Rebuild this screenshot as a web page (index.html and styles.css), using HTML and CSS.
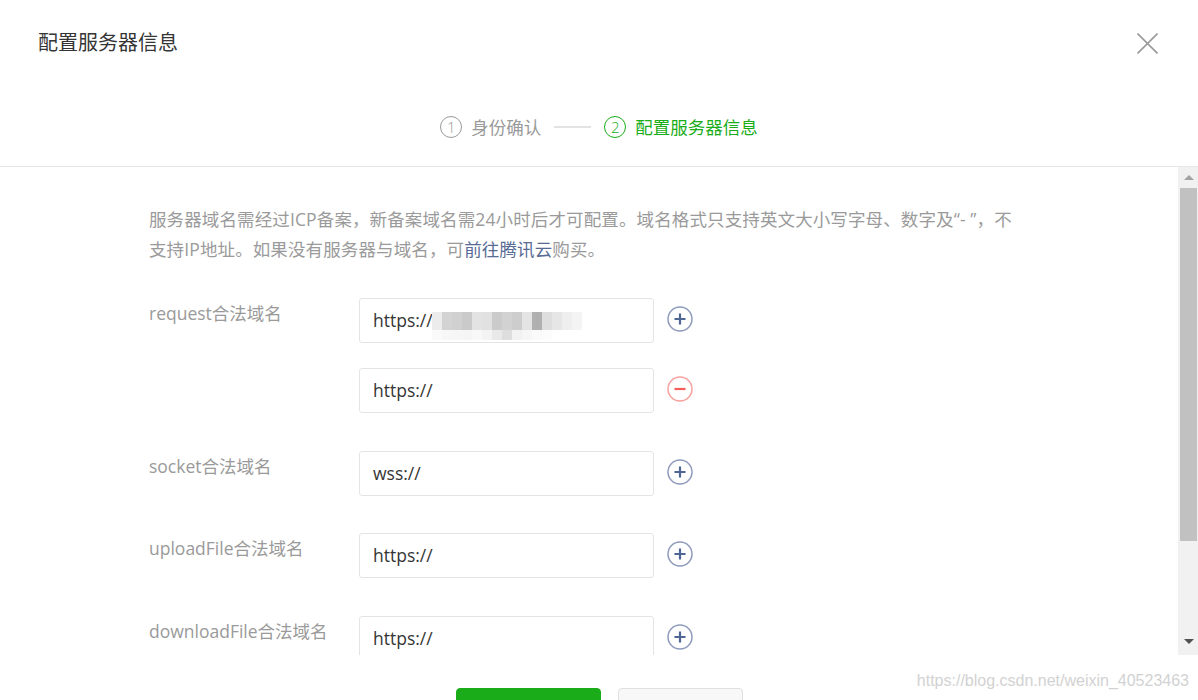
FILE: index.html
```html
<!DOCTYPE html>
<html lang="zh-CN">
<head>
<meta charset="utf-8">
<title>配置服务器信息</title>
<link rel="stylesheet" href="styles.css">
</head>
<body>
<div class="dialog">
  <header class="hd">
    <div class="hd-top">
      <h1 class="title">配置服务器信息</h1>
      <span class="close">
        <svg width="21" height="21" viewBox="0 0 21 21"><path d="M0.5 0.5 L20.5 20.5 M20.5 0.5 L0.5 20.5" stroke="#9a9a9a" stroke-width="1.6" fill="none"/></svg>
      </span>
    </div>
    <div class="steps">
      <div class="step"><span class="num">1</span><span class="step-label">身份确认</span></div>
      <span class="step-line"></span>
      <div class="step active"><span class="num">2</span><span class="step-label">配置服务器信息</span></div>
    </div>
  </header>

  <div class="bd">
    <div class="content">
      <p class="tips">服务器域名需经过ICP备案，新备案域名需24小时后才可配置。域名格式只支持英文大小写字母、数字及“- ”，不<br>支持IP地址。如果没有服务器与域名，可<a href="#">前往腾讯云</a>购买。</p>
      <div class="form">
        <div class="form-item">
          <label class="form-label">request合法域名</label>
          <div class="form-controls">
            <div class="ctrl-row">
              <div class="input">https://<span class="mosaic">
                <span class="mrow">
                  <i style="background:#ececec"></i><i style="background:#d3d3d3"></i><i style="background:#d0d0d0"></i><i style="background:#cacaca"></i><i style="background:#e3e3e3"></i><i style="background:#e1e1e1"></i><i style="background:#cbcbcb"></i><i style="background:#d2d2d2"></i><i style="background:#cdcdcd"></i><i style="background:#e4e4e4"></i><i style="background:#b0b0b0"></i><i style="background:#dedede"></i><i style="background:#e6e6e6"></i><i style="background:#eeeeee"></i><i style="background:#f4f4f4"></i>
                </span>
                <span class="mrow low">
                  <i style="background:#fafafa"></i><i style="background:#f7f7f7"></i><i style="background:#f6f6f6"></i><i style="background:#f5f5f5"></i><i style="background:#f8f8f8"></i><i style="background:#f3f3f3"></i><i style="background:#e9e9e9"></i><i style="background:#dedede"></i><i style="background:#f2f2f2"></i><i style="background:#f6f6f6"></i><i style="background:#fafafa"></i><i style="background:#fcfcfc"></i><i style="background:#fff"></i><i style="background:#fff"></i><i style="background:#fff"></i>
                </span>
              </span></div>
              <svg class="icon" width="26" height="26" viewBox="0 0 26 26"><circle cx="13" cy="13" r="12" fill="none" stroke="#8e9bbb" stroke-width="1.5"/><path d="M7.5 13 H18.5 M13 7.5 V18.5" stroke="#4f6594" stroke-width="2.2"/></svg>
            </div>
            <div class="ctrl-row">
              <div class="input">https://</div>
              <svg class="icon" width="26" height="26" viewBox="0 0 26 26"><circle cx="13" cy="13" r="12" fill="none" stroke="#f8a09e" stroke-width="1.5"/><path d="M7.5 13 H18.5" stroke="#f65e5c" stroke-width="2.2"/></svg>
            </div>
          </div>
        </div>

        <div class="form-item">
          <label class="form-label">socket合法域名</label>
          <div class="form-controls">
            <div class="ctrl-row">
              <div class="input">wss://</div>
              <svg class="icon" width="26" height="26" viewBox="0 0 26 26"><circle cx="13" cy="13" r="12" fill="none" stroke="#8e9bbb" stroke-width="1.5"/><path d="M7.5 13 H18.5 M13 7.5 V18.5" stroke="#4f6594" stroke-width="2.2"/></svg>
            </div>
          </div>
        </div>

        <div class="form-item">
          <label class="form-label">uploadFile合法域名</label>
          <div class="form-controls">
            <div class="ctrl-row">
              <div class="input">https://</div>
              <svg class="icon" width="26" height="26" viewBox="0 0 26 26"><circle cx="13" cy="13" r="12" fill="none" stroke="#8e9bbb" stroke-width="1.5"/><path d="M7.5 13 H18.5 M13 7.5 V18.5" stroke="#4f6594" stroke-width="2.2"/></svg>
            </div>
          </div>
        </div>

        <div class="form-item">
          <label class="form-label">downloadFile合法域名</label>
          <div class="form-controls">
            <div class="ctrl-row">
              <div class="input">https://</div>
              <svg class="icon" width="26" height="26" viewBox="0 0 26 26"><circle cx="13" cy="13" r="12" fill="none" stroke="#8e9bbb" stroke-width="1.5"/><path d="M7.5 13 H18.5 M13 7.5 V18.5" stroke="#4f6594" stroke-width="2.2"/></svg>
            </div>
          </div>
        </div>
      </div>
    </div>
    <div class="scrollbar">
      <span class="sb-btn"><span class="arrow up"></span></span>
      <div class="sb-track"><div class="sb-thumb"></div></div>
      <span class="sb-btn"><span class="arrow down"></span></span>
    </div>
  </div>

  <footer class="ft">
    <button class="btn btn-primary" aria-label="保存"></button>
    <button class="btn btn-default" aria-label="取消"></button>
  </footer>

  <div class="watermark">https://blog.csdn.net/weixin_40523463</div>
</div>
</body>
</html>
```

FILE: styles.css
```css
html, body {
  margin: 0;
  padding: 0;
  background: #fff;
}

body {
  font-family: "Open Sans", "Noto Sans CJK SC", sans-serif;
  color: #353535;
}

.dialog {
  width: 1198px;
  height: 700px;
  position: relative;
  overflow: hidden;
  display: flex;
  flex-direction: column;
}

/* header */
.hd {
  flex: none;
  height: 166px;
  border-bottom: 1px solid #e7e7e7;
}

.hd-top {
  display: flex;
  justify-content: space-between;
  align-items: center;
  height: 30px;
  padding: 28px 40px 0 38px;
}

.title {
  margin: 0;
  font-size: 20px;
  font-weight: normal;
  line-height: 30px;
  color: #353535;
}

.close {
  display: block;
  width: 21px;
  height: 21px;
}

.close svg {
  display: block;
}

.steps {
  display: flex;
  justify-content: center;
  align-items: center;
  height: 30px;
  margin-top: 54px;
  font-size: 17.5px;
  line-height: 30px;
}

.step {
  display: flex;
  align-items: center;
  gap: 9px;
  color: #9a9a9a;
}

.step.active {
  color: #1aad19;
}

.num {
  box-sizing: border-box;
  width: 22px;
  height: 22px;
  border: 1.3px solid currentColor;
  border-radius: 50%;
  display: flex;
  align-items: center;
  justify-content: center;
  font-size: 15px;
  line-height: 1;
  font-weight: 300;
}

.step-line {
  width: 37px;
  height: 2px;
  background: #e3e3e3;
  margin: 0 13px;
}

/* body */
.bd {
  flex: none;
  height: 488px;
  display: flex;
}

.content {
  flex: 1;
  overflow: hidden;
  padding: 37px 0 0 149px;
}

.tips {
  margin: 0;
  font-size: 17.5px;
  line-height: 30px;
  color: #9a9a9a;
  white-space: nowrap;
  letter-spacing: 0.12px;
}

.tips a {
  color: #576b95;
  text-decoration: none;
}

.form {
  margin-top: 34px;
}

.form-item {
  display: flex;
  margin-bottom: 37.5px;
}

.form-label {
  flex: none;
  width: 210px;
  font-size: 17.5px;
  line-height: 30px;
  color: #9a9a9a;
}

.form-controls {
  display: flex;
  flex-direction: column;
  gap: 25px;
}

.ctrl-row {
  display: flex;
  align-items: center;
  gap: 13px;
}

.input {
  position: relative;
  box-sizing: border-box;
  width: 295px;
  height: 45px;
  border: 1px solid #e4e4e4;
  border-radius: 3px;
  padding: 0 13px;
  font-size: 17.5px;
  line-height: 43px;
  color: #353535;
}

.mosaic {
  position: absolute;
  left: 72px;
  top: 13px;
  display: flex;
  flex-direction: column;
}

.mrow {
  display: flex;
  height: 18px;
}

.mrow.low {
  height: 10px;
}

.mrow i {
  display: block;
  width: 10px;
  height: 100%;
}

.icon {
  display: block;
  flex: none;
  margin-bottom: 3px;
}

/* fake scrollbar */
.scrollbar {
  flex: none;
  width: 20px;
  background: #f1f1f1;
  display: flex;
  flex-direction: column;
}

.sb-btn {
  height: 21px;
  display: flex;
  align-items: center;
  justify-content: center;
  flex: none;
}

.arrow {
  width: 0;
  height: 0;
  border-left: 5px solid transparent;
  border-right: 5px solid transparent;
  margin-left: 1px;
}

.arrow.up {
  border-bottom: 5px solid #a3a3a3;
}

.arrow.down {
  border-top: 5px solid #505050;
  margin-top: -6px;
}

.sb-track {
  flex: 1;
  padding: 0 1px 0 2px;
}

.sb-thumb {
  height: 353px;
  background: #c1c1c1;
}

/* footer */
.ft {
  flex: 1;
  display: flex;
  justify-content: center;
  gap: 17px;
  padding-top: 33px;
}

.btn {
  flex: none;
  box-sizing: border-box;
  height: 45px;
  border-radius: 4px;
  font-family: inherit;
  font-size: 17.5px;
  padding: 0;
}

.btn-primary {
  width: 145px;
  background: #1aad19;
  border: 1px solid #1aad19;
  color: #fff;
}

.btn-default {
  width: 125px;
  background: #f8f8f8;
  border: 1px solid #e0e0e0;
  color: #353535;
}

.watermark {
  position: absolute;
  right: 9px;
  top: 671px;
  font-family: "Liberation Sans", Arial, sans-serif;
  font-size: 16px;
  line-height: 20px;
  color: #d2d2d2;
}
```
